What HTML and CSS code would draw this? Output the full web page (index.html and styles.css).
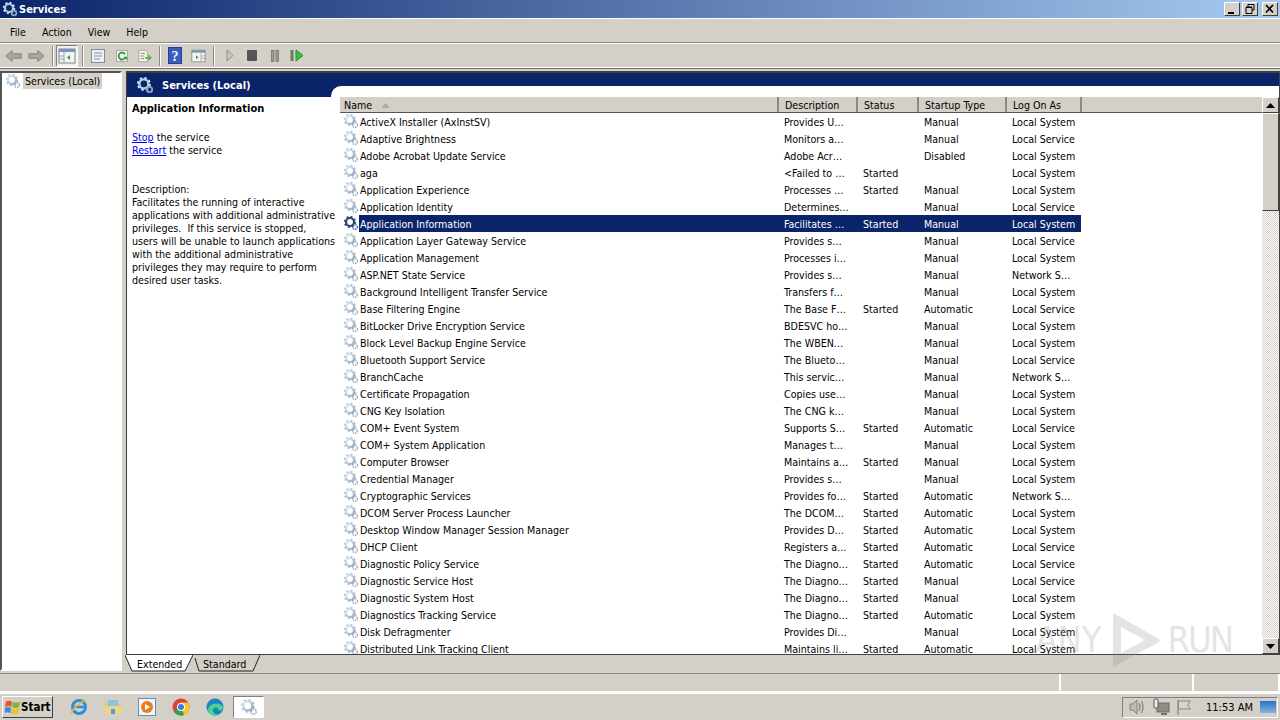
FILE: index.html
```html
<!DOCTYPE html>
<html lang="en">
<head>
<meta charset="utf-8">
<title>Services</title>
<link rel="stylesheet" href="styles.css">
</head>
<body>
<svg class="defs" width="0" height="0">
  <defs>
    <linearGradient id="gearfill" x1="0" y1="0" x2="1" y2="1"><stop offset="0" stop-color="#e4edf6"/><stop offset="1" stop-color="#8fa4bc"/></linearGradient>
    <symbol id="gear" viewBox="0 0 16 16">
      <circle cx="7" cy="7" r="5" fill="none" stroke="#aebfd2" stroke-width="2.4" stroke-dasharray="1.9 2"/>
      <circle cx="7" cy="7" r="4" fill="none" stroke="url(#gearfill)" stroke-width="2.2"/>
      <circle cx="12" cy="12" r="2.4" fill="none" stroke="#9aa9bc" stroke-width="1.5" stroke-dasharray="1.3 .8"/>
    </symbol>
    <symbol id="gearw" viewBox="0 0 16 16">
      <circle cx="7" cy="7" r="5" fill="none" stroke="#dfe9f5" stroke-width="2.4" stroke-dasharray="1.9 2"/>
      <circle cx="7" cy="7" r="4" fill="none" stroke="#b6cbe3" stroke-width="2.2"/>
      <circle cx="12" cy="12" r="2.4" fill="none" stroke="#90a8c4" stroke-width="1.6"/>
    </symbol>
    <symbol id="gearsel" viewBox="0 0 16 16">
      <circle cx="7" cy="7" r="5" fill="none" stroke="#3c5688" stroke-width="2.4" stroke-dasharray="1.9 2"/>
      <circle cx="7" cy="7" r="4" fill="none" stroke="#2a4478" stroke-width="2.2"/>
      <circle cx="12" cy="12" r="2.4" fill="none" stroke="#4c6490" stroke-width="1.5" stroke-dasharray="1.3 .8"/>
    </symbol>
  </defs>
</svg>
<header class="titlebar">
  <svg class="ico16"><use href="#gearw"/></svg>
  <span class="title">Services</span>
  <div class="winbtns">
    <span class="winbtn"><svg width="14" height="12" viewBox="0 0 14 12"><rect x="3" y="9" width="6" height="2" fill="#000"/></svg></span>
    <span class="winbtn"><svg width="14" height="12" viewBox="0 0 14 12"><path d="M5 1.500h6v5.500h-2M5 1.500v2M3 4.500h6v6H3z M3 4h6" fill="none" stroke="#000"/></svg></span>
    <span class="winbtn close"><svg width="14" height="12" viewBox="0 0 14 12"><path d="M3 2l7 7.500M10 2l-7 7.500" stroke="#000" stroke-width="1.700"/></svg></span>
  </div>
</header>
<nav class="menubar"><span>File</span><span>Action</span><span>View</span><span>Help</span></nav>
<div class="toolbar">
  <svg class="m1" width="17" height="16" viewBox="0 0 19 16"><path d="M1 8l7-6v3.500h10v5H8V14z" fill="#a8a8a0" stroke="#7c7c74"/></svg>
  <svg class="m6" width="17" height="16" viewBox="0 0 19 16"><path d="M18 8l-7-6v3.500H1v5h10V14z" fill="#a8a8a0" stroke="#7c7c74"/></svg>
  <i class="sep m7"></i>
  <span class="tb-on m2"><svg width="18" height="16" viewBox="0 0 18 16"><rect x="1" y="1" width="16" height="14" fill="#f4f4f0" stroke="#7f8a90"/><rect x="1" y="1" width="16" height="3" fill="#7a93b8"/><path d="M6 4v11M1 8h5M1 11h5" stroke="#9aa3a8"/><path d="M12 7v5l-3-2.500z" fill="#3d9a48"/></svg></span>
  <i class="sep m4"></i>
  <svg class="m7" width="14" height="16" viewBox="0 0 14 16"><rect x=".5" y="1.500" width="13" height="13" fill="#eef0f2" stroke="#7d8f9f"/><path d="M3 5h8M3 8h8M3 11h6" stroke="#7d96b0"/></svg>
  <svg class="m11" width="12" height="16" viewBox="0 0 14 16"><rect x=".5" y="1.500" width="13" height="13" fill="#f2f2ec" stroke="#a0a8a0"/><path d="M10.500 6a4 4 0 1 0 .5 3" fill="none" stroke="#2f9a3c" stroke-width="2"/><path d="M9 9h4v4z" fill="#2f9a3c"/></svg>
  <svg class="m9" width="15" height="16" viewBox="0 0 17 16"><path d="M2 1.500h8l2 2v11H2z" fill="#f6f4e6" stroke="#a0a090"/><path d="M4 5h5M4 8h4M4 11h4" stroke="#777"/><path d="M9 9h4V6l4 4-4 4v-3H9z" fill="#58b848"/></svg>
  <i class="sep m7"></i>
  <svg class="m7" width="14" height="17" viewBox="0 0 14 17"><rect x=".5" y=".5" width="13" height="16" fill="#3a5cc0" stroke="#24408f"/><text class="helpq" x="7" y="14" text-anchor="middle">?</text></svg>
  <svg class="m9" width="15" height="14" viewBox="0 0 18 16"><rect x="1" y="1" width="16" height="14" fill="#f4f4f0" stroke="#7f8a90"/><rect x="1" y="1" width="16" height="3" fill="#7a93b8"/><path d="M12 4v11M12 8h5M12 11h5" stroke="#9aa3a8"/><path d="M6 7v5l3-2.500z" fill="#3d9a48"/></svg>
  <i class="sep m7"></i>
  <svg class="m11" width="8" height="13" viewBox="0 0 8 13"><path d="M1 1l6 5.500L1 12z" fill="#c8c8c0" stroke="#8e8e88"/></svg>
  <svg class="m13" width="10" height="11" viewBox="0 0 10 11"><rect width="10" height="11" rx="1" fill="#555"/></svg>
  <svg class="m14" width="8" height="12" viewBox="0 0 8 12"><rect x=".5" y=".5" width="2.500" height="11" fill="#9b9b96" stroke="#6a6a66" stroke-width=".7"/><rect x="5" y=".5" width="2.500" height="11" fill="#9b9b96" stroke="#6a6a66" stroke-width=".7"/></svg>
  <svg class="m11" width="14" height="13" viewBox="0 0 14 13"><rect x=".5" y="1" width="3" height="11" fill="#6d7a62"/><path d="M6 1l7 5.500L6 12z" fill="#35c43a" stroke="#1f8f28"/></svg>
</div>
<main class="workspace">
  <aside class="tree">
    <div class="tree-item">
      <svg class="ico16"><use href="#gear"/></svg>
      <span class="tree-label">Services (Local)</span>
    </div>
  </aside>
  <section class="pane">
    <div class="pane-wrap">
      <div class="pane-head">
        <svg class="ico18"><use href="#gearw"/></svg>
        <span>Services (Local)</span>
      </div>
      <div class="pane-body">
        <div class="info">
          <h2>Application Information</h2>
          <p class="actions"><a>Stop</a> the service<br><a>Restart</a> the service</p>
          <p class="desc">Description:<br>Facilitates the running of interactive<br>applications with additional administrative<br>privileges.  If this service is stopped,<br>users will be unable to launch applications<br>with the additional administrative<br>privileges they may require to perform<br>desired user tasks.</p>
        </div>
        <div class="listwrap">
          <div class="list">
            <div class="row headrow">
              <span class="c-name">Name<svg class="sort" width="9" height="5" viewBox="0 0 9 5"><path d="M4.500 0L9 5H0z" fill="#b0aca2"/></svg></span>
              <span class="c-desc">Description</span><span class="c-stat">Status</span><span class="c-type">Startup Type</span><span class="c-log">Log On As</span><span class="c-fill"></span>
            </div>
            <div class="rows">
              <div class="row"><span class="c-name"><svg class="ico16"><use href="#gear"/></svg>ActiveX Installer (AxInstSV)</span><span class="c-desc">Provides U…</span><span class="c-stat"></span><span class="c-type">Manual</span><span class="c-log">Local System</span></div>
              <div class="row"><span class="c-name"><svg class="ico16"><use href="#gear"/></svg>Adaptive Brightness</span><span class="c-desc">Monitors a…</span><span class="c-stat"></span><span class="c-type">Manual</span><span class="c-log">Local Service</span></div>
              <div class="row"><span class="c-name"><svg class="ico16"><use href="#gear"/></svg>Adobe Acrobat Update Service</span><span class="c-desc">Adobe Acr…</span><span class="c-stat"></span><span class="c-type">Disabled</span><span class="c-log">Local System</span></div>
              <div class="row"><span class="c-name"><svg class="ico16"><use href="#gear"/></svg>aga</span><span class="c-desc">&lt;Failed to …</span><span class="c-stat">Started</span><span class="c-type"></span><span class="c-log">Local System</span></div>
              <div class="row"><span class="c-name"><svg class="ico16"><use href="#gear"/></svg>Application Experience</span><span class="c-desc">Processes …</span><span class="c-stat">Started</span><span class="c-type">Manual</span><span class="c-log">Local System</span></div>
              <div class="row"><span class="c-name"><svg class="ico16"><use href="#gear"/></svg>Application Identity</span><span class="c-desc">Determines…</span><span class="c-stat"></span><span class="c-type">Manual</span><span class="c-log">Local Service</span></div>
              <div class="row sel"><span class="c-name"><svg class="ico16"><use href="#gearsel"/></svg><b>Application Information</b></span><span class="c-desc">Facilitates …</span><span class="c-stat">Started</span><span class="c-type">Manual</span><span class="c-log">Local System</span></div>
              <div class="row"><span class="c-name"><svg class="ico16"><use href="#gear"/></svg>Application Layer Gateway Service</span><span class="c-desc">Provides s…</span><span class="c-stat"></span><span class="c-type">Manual</span><span class="c-log">Local Service</span></div>
              <div class="row"><span class="c-name"><svg class="ico16"><use href="#gear"/></svg>Application Management</span><span class="c-desc">Processes i…</span><span class="c-stat"></span><span class="c-type">Manual</span><span class="c-log">Local System</span></div>
              <div class="row"><span class="c-name"><svg class="ico16"><use href="#gear"/></svg>ASP.NET State Service</span><span class="c-desc">Provides s…</span><span class="c-stat"></span><span class="c-type">Manual</span><span class="c-log">Network S…</span></div>
              <div class="row"><span class="c-name"><svg class="ico16"><use href="#gear"/></svg>Background Intelligent Transfer Service</span><span class="c-desc">Transfers f…</span><span class="c-stat"></span><span class="c-type">Manual</span><span class="c-log">Local System</span></div>
              <div class="row"><span class="c-name"><svg class="ico16"><use href="#gear"/></svg>Base Filtering Engine</span><span class="c-desc">The Base F…</span><span class="c-stat">Started</span><span class="c-type">Automatic</span><span class="c-log">Local Service</span></div>
              <div class="row"><span class="c-name"><svg class="ico16"><use href="#gear"/></svg>BitLocker Drive Encryption Service</span><span class="c-desc">BDESVC ho…</span><span class="c-stat"></span><span class="c-type">Manual</span><span class="c-log">Local System</span></div>
              <div class="row"><span class="c-name"><svg class="ico16"><use href="#gear"/></svg>Block Level Backup Engine Service</span><span class="c-desc">The WBEN…</span><span class="c-stat"></span><span class="c-type">Manual</span><span class="c-log">Local System</span></div>
              <div class="row"><span class="c-name"><svg class="ico16"><use href="#gear"/></svg>Bluetooth Support Service</span><span class="c-desc">The Blueto…</span><span class="c-stat"></span><span class="c-type">Manual</span><span class="c-log">Local Service</span></div>
              <div class="row"><span class="c-name"><svg class="ico16"><use href="#gear"/></svg>BranchCache</span><span class="c-desc">This servic…</span><span class="c-stat"></span><span class="c-type">Manual</span><span class="c-log">Network S…</span></div>
              <div class="row"><span class="c-name"><svg class="ico16"><use href="#gear"/></svg>Certificate Propagation</span><span class="c-desc">Copies use…</span><span class="c-stat"></span><span class="c-type">Manual</span><span class="c-log">Local System</span></div>
              <div class="row"><span class="c-name"><svg class="ico16"><use href="#gear"/></svg>CNG Key Isolation</span><span class="c-desc">The CNG k…</span><span class="c-stat"></span><span class="c-type">Manual</span><span class="c-log">Local System</span></div>
              <div class="row"><span class="c-name"><svg class="ico16"><use href="#gear"/></svg>COM+ Event System</span><span class="c-desc">Supports S…</span><span class="c-stat">Started</span><span class="c-type">Automatic</span><span class="c-log">Local Service</span></div>
              <div class="row"><span class="c-name"><svg class="ico16"><use href="#gear"/></svg>COM+ System Application</span><span class="c-desc">Manages t…</span><span class="c-stat"></span><span class="c-type">Manual</span><span class="c-log">Local System</span></div>
              <div class="row"><span class="c-name"><svg class="ico16"><use href="#gear"/></svg>Computer Browser</span><span class="c-desc">Maintains a…</span><span class="c-stat">Started</span><span class="c-type">Manual</span><span class="c-log">Local System</span></div>
              <div class="row"><span class="c-name"><svg class="ico16"><use href="#gear"/></svg>Credential Manager</span><span class="c-desc">Provides s…</span><span class="c-stat"></span><span class="c-type">Manual</span><span class="c-log">Local System</span></div>
              <div class="row"><span class="c-name"><svg class="ico16"><use href="#gear"/></svg>Cryptographic Services</span><span class="c-desc">Provides fo…</span><span class="c-stat">Started</span><span class="c-type">Automatic</span><span class="c-log">Network S…</span></div>
              <div class="row"><span class="c-name"><svg class="ico16"><use href="#gear"/></svg>DCOM Server Process Launcher</span><span class="c-desc">The DCOM…</span><span class="c-stat">Started</span><span class="c-type">Automatic</span><span class="c-log">Local System</span></div>
              <div class="row"><span class="c-name"><svg class="ico16"><use href="#gear"/></svg>Desktop Window Manager Session Manager</span><span class="c-desc">Provides D…</span><span class="c-stat">Started</span><span class="c-type">Automatic</span><span class="c-log">Local System</span></div>
              <div class="row"><span class="c-name"><svg class="ico16"><use href="#gear"/></svg>DHCP Client</span><span class="c-desc">Registers a…</span><span class="c-stat">Started</span><span class="c-type">Automatic</span><span class="c-log">Local Service</span></div>
              <div class="row"><span class="c-name"><svg class="ico16"><use href="#gear"/></svg>Diagnostic Policy Service</span><span class="c-desc">The Diagno…</span><span class="c-stat">Started</span><span class="c-type">Automatic</span><span class="c-log">Local Service</span></div>
              <div class="row"><span class="c-name"><svg class="ico16"><use href="#gear"/></svg>Diagnostic Service Host</span><span class="c-desc">The Diagno…</span><span class="c-stat">Started</span><span class="c-type">Manual</span><span class="c-log">Local Service</span></div>
              <div class="row"><span class="c-name"><svg class="ico16"><use href="#gear"/></svg>Diagnostic System Host</span><span class="c-desc">The Diagno…</span><span class="c-stat">Started</span><span class="c-type">Manual</span><span class="c-log">Local System</span></div>
              <div class="row"><span class="c-name"><svg class="ico16"><use href="#gear"/></svg>Diagnostics Tracking Service</span><span class="c-desc">The Diagno…</span><span class="c-stat">Started</span><span class="c-type">Automatic</span><span class="c-log">Local System</span></div>
              <div class="row"><span class="c-name"><svg class="ico16"><use href="#gear"/></svg>Disk Defragmenter</span><span class="c-desc">Provides Di…</span><span class="c-stat"></span><span class="c-type">Manual</span><span class="c-log">Local System</span></div>
              <div class="row"><span class="c-name"><svg class="ico16"><use href="#gear"/></svg>Distributed Link Tracking Client</span><span class="c-desc">Maintains li…</span><span class="c-stat">Started</span><span class="c-type">Automatic</span><span class="c-log">Local System</span></div>
            </div>
          </div>
          <div class="scrollbar">
            <span class="sbtn"><svg width="9" height="5" viewBox="0 0 9 5"><path d="M4.500 0L9 5H0z"/></svg></span>
            <span class="thumb"></span>
            <span class="track"></span>
            <span class="sbtn"><svg width="9" height="5" viewBox="0 0 9 5"><path d="M4.500 5L9 0H0z"/></svg></span>
          </div>
        </div>
      </div>
    </div>
    <div class="tabs">
      <span class="tab on"><svg class="tabshape" width="68" height="17" viewBox="0 0 68 17"><path d="M0 0h68l-8 16H7z" fill="#fff"/><path d="M0 0l7 16h53l8-16" fill="none" stroke="#222"/></svg><span class="tabtext">Extended</span></span>
      <span class="tab two"><svg class="tabshape" width="67" height="17" viewBox="0 0 67 17"><path d="M3 5l4 11h53l7-16H1z" fill="#d4d0c8"/><path d="M2 3l4 13h54l7-16" fill="none" stroke="#222"/></svg><span class="tabtext">Standard</span></span>
    </div>
    <div class="watermark" aria-hidden="true"><span class="wm-any">ANY</span><svg width="56" height="60" viewBox="0 0 56 60"><path d="M6 3l46 26a2 2 0 0 1 0 3L6 57zM14 17v26l24-13z" fill="#8a8a8a" fill-rule="evenodd"/></svg><span class="wm-run">RUN</span></div>
  </section>
</main>
<footer class="statusbar"><span class="st-a"></span><span class="st-b"></span><span class="st-c"></span></footer>
<div class="taskbar">
  <button class="start">
    <svg width="16" height="16" viewBox="0 0 18 18"><path d="M1 3q4-2 7 0l-1 6q-3-2-7 0z" fill="#e8562a"/><path d="M9 3q4 2 8 0l-1 6q-4 2-8 0z" fill="#7cb83a"/><path d="M0 10q3-2 7 0l-1 6q-3-2-7 0z" fill="#3d8ae0"/><path d="M8 10q4 2 8 0l-1 6q-4 2-8 0z" fill="#f2c21c"/></svg>
    <span>Start</span>
  </button>
  <div class="apps">
    <svg width="20" height="20" viewBox="0 0 20 20"><circle cx="10" cy="10" r="6.500" fill="none" stroke="#2c8fdc" stroke-width="3"/><path d="M4 10h12" stroke="#2c8fdc" stroke-width="2.500"/><path d="M2 17q1-6 14-14" fill="none" stroke="#e8b830" stroke-width="1.500"/></svg>
    <svg width="20" height="20" viewBox="0 0 20 20"><path d="M2 5h6l2 2h8v10H2z" fill="#e8c668"/><rect x="5" y="3" width="10" height="7" fill="#8cc4e0"/><path d="M2 9h16v8H2z" fill="#f0d488"/><rect x="8" y="12" width="4" height="5" fill="#5a9ad0"/></svg>
    <svg width="20" height="20" viewBox="0 0 20 20"><rect x="1.500" y="1.500" width="17" height="17" fill="#f4f4f0" stroke="#5b8fd0"/><circle cx="10" cy="10" r="6" fill="#e87e1c"/><path d="M8 7l5 3-5 3z" fill="#fff"/></svg>
    <svg width="20" height="20" viewBox="0 0 20 20"><circle cx="10" cy="10" r="8.500" fill="#dc4438"/><path d="M10 10L2.600 14.300A8.500 8.500 0 0 0 13 18z" fill="#2ea24c"/><path d="M10 10l3 8A8.500 8.500 0 0 0 18.500 10 8 8 0 0 0 17 5.500H10z" fill="#f6c62c"/><circle cx="10" cy="10" r="4" fill="#fff"/><circle cx="10" cy="10" r="3" fill="#3a78e0"/></svg>
    <svg width="20" height="20" viewBox="0 0 20 20"><circle cx="10" cy="10" r="8.500" fill="#1584c8"/><path d="M3 13C3 6 15 4 18 10c.5 3-3 4-5 3 2-3-6-4-5 1 .5 3 4 4 7 3-4 3-11 2-12-4z" fill="#4cd08c"/></svg>
    <span class="app-on"><svg class="ico18"><use href="#gear"/></svg></span>
  </div>
  <div class="tray">
    <svg width="18" height="16" viewBox="0 0 18 16"><path d="M2 5h3l4-4v14l-4-4H2z" fill="#c0bcb2" stroke="#86827a"/><path d="M11 4q2 4 0 8M13.500 2q3 6 0 12" fill="none" stroke="#86827a" stroke-width="1.200"/></svg>
    <svg width="18" height="18" viewBox="0 0 18 18"><rect x="5" y="5" width="12" height="9" fill="#8e8e86" stroke="#6c6c66"/><rect x="2" y="1" width="4" height="9" rx="1" fill="#eeeee8" stroke="#55554f"/><path d="M9 16h6" stroke="#55554f" stroke-width="1.500"/></svg>
    <svg width="16" height="16" viewBox="0 0 16 16"><path d="M2 1v15" stroke="#77756c"/><path d="M2.500 2h12l-3 4 3 4h-12z" fill="#d8d4ca" stroke="#8a887e"/></svg>
    <span class="clock">11:53 AM</span>
    <span class="showdesk"></span>
  </div>
</div>
</body>
</html>
```

FILE: styles.css
```css
* { box-sizing: border-box; }
html, body { margin: 0; height: 720px; overflow: hidden; }
body {
  display: flex; flex-direction: column;
  background: #d4d0c8; color: #000;
  font: 10.6px/13px "DejaVu Sans Condensed", "DejaVu Sans", sans-serif;
}
.defs { position: absolute; }
.ico16 { width: 16px; height: 16px; flex: none; }
.ico18 { width: 18px; height: 18px; flex: none; }

.titlebar {
  height: 18px; flex: none; display: flex; align-items: center; gap: 1px; padding: 0 2px;
  background: linear-gradient(90deg, #0a246a, #a6caf0);
  color: #fff; font-weight: 700; font-size: 11px;
}
.title { flex: 1; }
.winbtns { display: flex; gap: 2px; }
.winbtn {
  width: 16px; height: 14px; display: flex; align-items: center; justify-content: center;
  background: #d4d0c8;
  border: 1px solid; border-color: #fff #404040 #404040 #fff;
}
.close { margin-left: 2px; }

.menubar {
  height: 25px; flex: none; display: flex; align-items: center; gap: 16px; padding: 3px 0 0 10px;
  border-top: 1px solid #fff; border-bottom: 1px solid #8c8a84;
}
.toolbar {
  height: 25px; flex: none; display: flex; align-items: center; padding: 0 0 0 4px;
  border-top: 1px solid #fff; border-bottom: 1px solid #fff;
}
.m1 { margin-left: 1px; }
.m2 { margin-left: 2px; }
.m4 { margin-left: 4px; }
.m6 { margin-left: 6px; }
.m7 { margin-left: 7px; }
.m9 { margin-left: 9px; }
.m11 { margin-left: 11px; }
.m13 { margin-left: 13px; }
.m14 { margin-left: 14px; }
.sep { width: 2px; height: 20px; background: #8c8a84; border-right: 1px solid #fff; }
.tb-on { width: 22px; height: 22px; display: flex; align-items: center; justify-content: center; background: #efeeea; border: 1px solid; border-color: #808080 #fff #fff #808080; }
.helpq { font: 700 14px "Liberation Serif", serif; fill: #fff; }

.workspace {
  height: 604px; flex: none; display: flex; padding-top: 2px; gap: 4px; border-top: 1px solid #6e6e6a;
}
.tree {
  width: 122px; flex: none; height: 600px; background: #fff;
  border: 2px solid; border-color: #555 #fff #fff #555; padding: 0 0 0 3px;
}
.tree-item { display: flex; align-items: flex-start; gap: 2px; }
.tree-label { background: #d4d0c8; padding: 2px 2px 1px; height: 16px; width: 79px; white-space: nowrap; }

.pane { width: 1154px; flex: none; display: flex; flex-direction: column; position: relative; }
.pane-wrap { height: 584px; border-style: solid; border-width: 2px 1px 1px 1px; border-color: #404040; background: #0a246a; display: flex; flex-direction: column; position: relative; }
.pane-head {
  height: 24px; flex: none; width: 204px; display: flex; align-items: center; gap: 8px; padding: 0 0 0 9px;
  color: #fff; font-weight: 700; font-size: 11px; background: #0a246a;
}
.pane-body { flex: 1; background: #fff; display: flex; min-height: 0; position: relative; }
.pane-body::before {
  content: ""; position: absolute; left: 204px; right: 0; top: -11px; height: 11px; background: #fff; border-top-left-radius: 10px;
}
.info { width: 213px; flex: none; padding: 5px 0 0 5px; line-height: 13px; }
.info h2 { font: 700 11px/14px "DejaVu Sans Condensed", "DejaVu Sans", sans-serif; margin: 0 0 15px; }
.info p { margin: 0 0 26px; }
.actions a { color: #0000ee; text-decoration: underline; }
.desc { white-space: pre; }

.listwrap { flex: 1; display: flex; min-width: 0; }
.list { flex: 1; min-width: 0; overflow: hidden; display: flex; flex-direction: column; }
.row { display: flex; height: 17px; align-items: center; white-space: nowrap; width: 741px; }
.rows .row span { line-height: 19px; height: 17px; }
.rows .row .c-name { align-items: flex-start; }
.headrow { width: 100%; height: 16px; background: #d4d0c8; border-bottom: 1px solid #555; flex: none; }
.headrow span { height: 100%; border-right: 2px solid #8c8a84; display: flex; align-items: center; padding-top: 2px; }
.headrow .c-name { width: 439px; padding-left: 4px; }
.headrow .c-fill { flex: 1; border-right: 0; }
.sort { margin-left: 8px; }
.rows { flex: 1; overflow: hidden; }
.c-name { width: 438px; padding-left: 3px; display: flex; align-items: center; gap: 1px; }
.c-desc { width: 79px; padding-left: 6px; }
.c-stat { width: 61px; padding-left: 6px; }
.c-type { width: 88px; padding-left: 6px; }
.c-log { width: 75px; padding-left: 6px; }
.sel { color: #fff; }
.sel span:not(.c-name), .sel b { background: #0a246a; height: 17px; line-height: 19px; }
.sel b { font-weight: 400; flex: 1; margin-left: -1px; padding-left: 1px; }

.scrollbar { width: 17px; flex: none; display: flex; flex-direction: column; }
.sbtn { height: 16px; flex: none; display: flex; align-items: center; justify-content: center; background: #d4d0c8; border: 1px solid; border-color: #fff #404040 #404040 #fff; }
.thumb { height: 98px; flex: none; background: #d4d0c8; border: 1px solid; border-color: #fff #404040 #404040 #fff; }
.track { flex: 1; background: repeating-conic-gradient(#d4d0c8 0 25%, #fff 0 50%) 0 0 / 2px 2px; }

.tabs { height: 17px; flex: none; display: flex; margin-left: -1px; }
.tab { position: relative; width: 68px; height: 17px; padding-left: 12px; line-height: 18px; }
.tab.two { width: 67px; padding-left: 10px; }
.tabshape { position: absolute; left: 0; top: 0; }
.tabtext { position: relative; }

.watermark {
  position: absolute; z-index: 5; right: 48px; bottom: 2px; display: flex; align-items: center; gap: 5px;
  color: #8a8a8a; opacity: .22; font: 36px/60px "DejaVu Sans Condensed", "DejaVu Sans", sans-serif; pointer-events: none;
}
.wm-any { letter-spacing: 0; }
.wm-run { letter-spacing: -2px; }

.statusbar {
  height: 19px; flex: none; display: flex; margin-top: 1px; border-top: 1px solid #8c8a84;
}
.statusbar span { border-right: 2px solid #fff; border-bottom: 1px solid #fff; }
.st-a { width: 1061px; }
.st-b { width: 133px; }
.st-c { flex: 1; }

.taskbar {
  flex: 1; display: flex; align-items: center; border-top: 2px solid #fff; padding: 0 2px;
}
.start {
  width: 51px; height: 22px; padding: 0 0 0 2px; display: flex; align-items: center; gap: 0;
  background: #d4d0c8; border: 1px solid; border-color: #fff #404040 #404040 #fff;
  font: 700 11.5px "DejaVu Sans Condensed", "DejaVu Sans", sans-serif;
}
.apps { display: flex; align-items: center; gap: 14px; margin-left: 16px; flex: 1; }
.app-on { width: 31px; height: 22px; display: flex; align-items: center; justify-content: center; background: #fff; border: 1px solid; border-color: #808080 #fff #fff #808080; margin-left: -6px; }
.tray {
  height: 21px; display: flex; align-items: center; gap: 6px; padding: 0 1px 0 5px; width: 156px;
  border: 1px solid; border-color: #808080 #fff #fff #808080;
}
.clock { margin-left: 8px; white-space: nowrap; font-size: 11px; }
.showdesk { width: 16px; height: 12px; margin-left: auto; background: linear-gradient(#2e6fc4, #7fb4e8); flex: none; }
```
